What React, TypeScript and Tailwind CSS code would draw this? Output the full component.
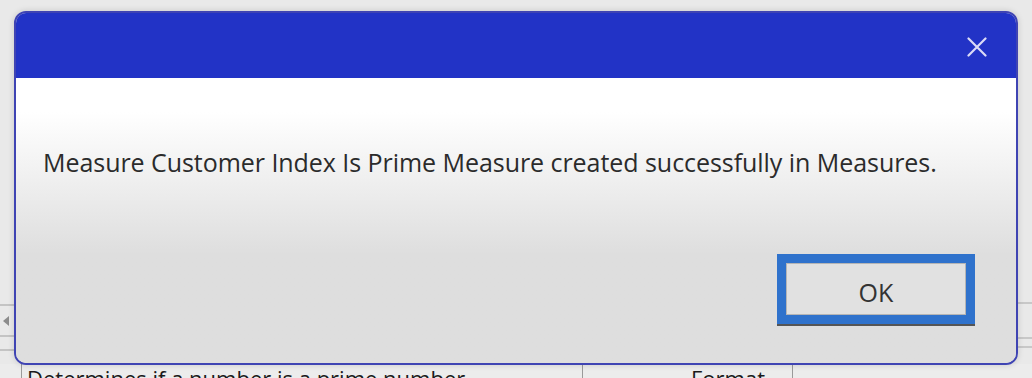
function SheetBackdrop() {
  return (
    <div className="flex h-full w-full flex-col bg-[#e9e9e9]">
      <div className="flex flex-1">
        <div className="flex w-[14px] flex-col">
          <div className="h-[304px]" />
          <div className="h-[2px] bg-[#c4c4c4]" />
          <div className="flex h-[29px] items-center pl-[3px]">
            <div className="h-0 w-0 border-y-[5px] border-r-[6px] border-y-transparent border-r-[#8c8c8c]" />
          </div>
          <div className="h-[2px] bg-[#c4c4c4]" />
          <div className="h-[12px]" />
          <div className="h-[2px] bg-[#c4c4c4]" />
        </div>
        <div className="flex-1" />
        <div className="flex w-[15px] flex-col">
          <div className="h-[302px]" />
          <div className="h-[2px] bg-[#c8c8c8]" />
          <div className="h-[33px]" />
          <div className="h-[2px] bg-[#c8c8c8]" />
          <div className="h-[7px]" />
          <div className="h-[2px] bg-[#c8c8c8]" />
        </div>
      </div>
      <div className="flex h-[14px] overflow-hidden bg-[#ececec] font-['Open_Sans',sans-serif] text-[22px] leading-none text-[#1a1a1a]">
        <div className="w-[22px] border-r border-[#9a9a9a]" />
        <div className="w-[561px] border-r border-[#9a9a9a] pl-[5px] pt-[3px]">
          Determines if a number is a prime number
        </div>
        <div className="w-[210px] border-r border-[#9a9a9a] pl-[108px] pt-[3px]">Format</div>
        <div className="flex-1" />
      </div>
    </div>
  );
}

function CloseGlyph() {
  return (
    <svg width="20" height="20" viewBox="0 0 20 20" fill="none" stroke="#dcdcf6" strokeWidth="2.2" strokeLinecap="round">
      <path d="M1.5 1.5 18.5 18.5M18.5 1.5 1.5 18.5" />
    </svg>
  );
}

function MessageDialog() {
  return (
    <div className="absolute left-[14px] top-[11px] flex h-[354px] w-[1004px] flex-col overflow-hidden rounded-[12px] border-2 border-[#3f44b3] shadow-[0_0_6px_rgba(0,0,0,0.15)]">
      <div className="flex h-[65px] shrink-0 items-start justify-end bg-[#2233c6] pr-[29px] pt-[24px]">
        <CloseGlyph />
      </div>
      <div className="flex flex-1 flex-col bg-gradient-to-b from-white from-[12%] to-[#dedede] to-[62%]">
        <p className="pl-[27px] pt-[67px] font-['Open_Sans',sans-serif] text-[25px] leading-[34px] tracking-[-0.05px] text-[#2b2b2b]">
          Measure Customer Index Is Prime Measure created successfully in Measures.
        </p>
        <div className="flex flex-1 items-end justify-end pb-[39px] pr-[41px]">
          <button className="flex h-[70px] w-[198px] items-center justify-center border-[9px] border-[#2f72cc] bg-[#e1e1e1] pt-[8px] font-['Open_Sans',sans-serif] text-[25px] text-[#333] shadow-[inset_0_0_0_1px_#b5b5b5,0_2px_0_#555]">
            OK
          </button>
        </div>
      </div>
    </div>
  );
}

export default function App() {
  return (
    <div className="relative h-[378px] w-[1032px] overflow-hidden">
      <SheetBackdrop />
      <MessageDialog />
    </div>
  );
}
